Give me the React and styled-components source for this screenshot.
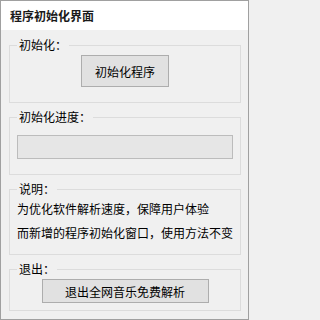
import React from "react";
import styled, { createGlobalStyle } from "styled-components";

//* Global
const GlobalStyle = createGlobalStyle`
  html, body {
    margin: 0;
    padding: 0;
    background: #f0f0f0;
  }
  * {
    box-sizing: border-box;
  }
`;

const font = `"Noto Sans CJK SC", "Liberation Sans", sans-serif`;

function App() {
  return (
    <>
      <GlobalStyle />
      <Window>
        <TitleBar>程序初始化界面</TitleBar>
        <Body>
          <Group $pt={3} $pb={15}>
            <Legend>初始化：</Legend>
            <Centered>
              <Button $w={88} $h={32}>初始化程序</Button>
            </Centered>
          </Group>

          <Group $pt={11} $pb={15}>
            <Legend>初始化进度：</Legend>
            <Progress />
          </Group>

          <Group $pt={1} $pb={9}>
            <Legend>说明：</Legend>
            <Line>为优化软件解析速度，保障用户体验</Line>
            <Line>而新增的程序初始化窗口，使用方法不变</Line>
          </Group>

          <Group $pt={3} $pb={7}>
            <Legend>退出：</Legend>
            <Centered>
              <Button $w={167} $h={24}>退出全网音乐免费解析</Button>
            </Centered>
          </Group>
        </Body>
      </Window>
    </>
  );
}

export default App;

const Window = styled.div`
  display: flex;
  flex-direction: column;
  width: 249px;
  height: 320px;
  border: 1px solid #a0a0a0;
  background: #f0f0f0;
  font-family: ${font};
  color: #000;
`;

const TitleBar = styled.div`
  display: flex;
  align-items: center;
  height: 29px;
  padding-left: 9px;
  background: #ffffff;
  font-size: 12px;
  font-weight: bold;
  color: #1a1a1a;
`;

const Body = styled.div`
  display: flex;
  flex-direction: column;
  gap: 7px;
  padding: 8px 7px 0 8px;
`;

const Group = styled.fieldset`
  margin: 0;
  min-width: 0;
  padding: ${(p) => p.$pt}px 7px ${(p) => p.$pb}px 7px;
  border: 1px solid #dcdcdc;
`;

const Legend = styled.legend`
  padding: 0 2px;
  font-size: 12px;
  line-height: 14px;
  height: 14px;
`;

const Centered = styled.div`
  display: flex;
  justify-content: center;
`;

const Button = styled.button`
  width: ${(p) => p.$w}px;
  height: ${(p) => p.$h}px;
  padding: 0;
  border: 1px solid #adadad;
  background: #e1e1e1;
  font-family: ${font};
  font-size: 12px;
  color: #000;
`;

const Progress = styled.div`
  height: 24px;
  border: 1px solid #bcbcbc;
  background: #e6e6e6;
`;

const Line = styled.div`
  font-size: 12px;
  line-height: 24px;
  white-space: nowrap;
`;
